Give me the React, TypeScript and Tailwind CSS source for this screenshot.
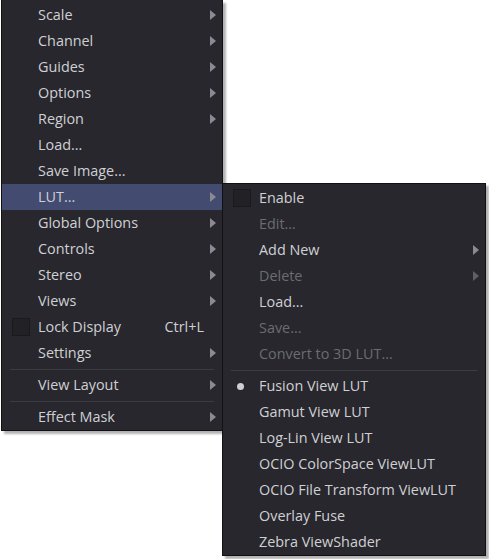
import React from 'react';

type Item =
  | { sep: true }
  | {
      sep?: false;
      label: string;
      arrow?: boolean;
      check?: boolean;
      dot?: boolean;
      shortcut?: string;
      disabled?: boolean;
      active?: boolean;
    };

const mainItems: Item[] = [
  { label: 'Scale', arrow: true },
  { label: 'Channel', arrow: true },
  { label: 'Guides', arrow: true },
  { label: 'Options', arrow: true },
  { label: 'Region', arrow: true },
  { label: 'Load...' },
  { label: 'Save Image...' },
  { label: 'LUT...', arrow: true, active: true },
  { label: 'Global Options', arrow: true },
  { label: 'Controls', arrow: true },
  { label: 'Stereo', arrow: true },
  { label: 'Views', arrow: true },
  { label: 'Lock Display', check: true, shortcut: 'Ctrl+L' },
  { label: 'Settings', arrow: true },
  { sep: true },
  { label: 'View Layout', arrow: true },
  { sep: true },
  { label: 'Effect Mask', arrow: true },
];

const lutItems: Item[] = [
  { label: 'Enable', check: true },
  { label: 'Edit...', disabled: true },
  { label: 'Add New', arrow: true },
  { label: 'Delete', arrow: true, disabled: true },
  { label: 'Load...' },
  { label: 'Save...', disabled: true },
  { label: 'Convert to 3D LUT...', disabled: true },
  { sep: true },
  { label: 'Fusion View LUT', dot: true },
  { label: 'Gamut View LUT' },
  { label: 'Log-Lin View LUT' },
  { label: 'OCIO ColorSpace ViewLUT' },
  { label: 'OCIO File Transform ViewLUT' },
  { label: 'Overlay Fuse' },
  { label: 'Zebra ViewShader' },
];

function Arrow({ disabled }: { disabled?: boolean }) {
  return (
    <svg width="6" height="10" viewBox="0 0 6 10" className="shrink-0">
      <path d="M0 0 L6 5 L0 10 Z" fill={disabled ? '#5f5f66' : '#8a8a92'} />
    </svg>
  );
}

function Row({ item }: { item: Item }) {
  if (item.sep) {
    return (
      <div className="h-[6px] flex items-center px-[8px]">
        <div className="h-px w-full bg-[#3c3c43]" />
      </div>
    );
  }
  return (
    <div
      className={`h-[26px] flex items-center ${item.active ? 'bg-[#434b70]' : ''} ${
        item.disabled ? 'text-[#6c6c70]' : 'text-[#d0d0d4]'
      }`}
    >
      <div className="w-[36px] flex items-center justify-center shrink-0 pl-[2px]">
        {item.check && <div className="w-[18px] h-[18px] bg-[#222226] border border-[#1a1a1d]" />}
        {item.dot && <div className="w-[7px] h-[7px] rounded-full bg-[#cfcfd2] mr-[4px]" />}
      </div>
      <span className="flex-1 whitespace-nowrap">{item.label}</span>
      {item.shortcut && <span className="mr-[18px]">{item.shortcut}</span>}
      {item.arrow && (
        <div className="w-[20px] pr-[6px] flex justify-end">
          <Arrow disabled={item.disabled} />
        </div>
      )}
    </div>
  );
}

export default function App() {
  return (
    <div
      className="relative w-[489px] h-[559px] bg-white overflow-hidden text-[14.4px] leading-none"
      style={{ fontFamily: '"Open Sans", "Noto Sans", sans-serif' }}
    >
      <div className="ml-[1px] w-[222px] pt-[2px] bg-[#27272d] border border-t-0 border-[#111114] shadow-[3px_3px_2px_rgba(0,0,0,0.3)]">
        {mainItems.map((it, i) => (
          <Row key={i} item={it} />
        ))}
      </div>

      <div className="absolute left-[222px] top-[183px] w-[264px] pt-[1px] bg-[#27272d] border border-[#111114] shadow-[3px_3px_2px_rgba(0,0,0,0.3)]">
        {lutItems.map((it, i) => (
          <Row key={i} item={it} />
        ))}
      </div>
    </div>
  );
}
